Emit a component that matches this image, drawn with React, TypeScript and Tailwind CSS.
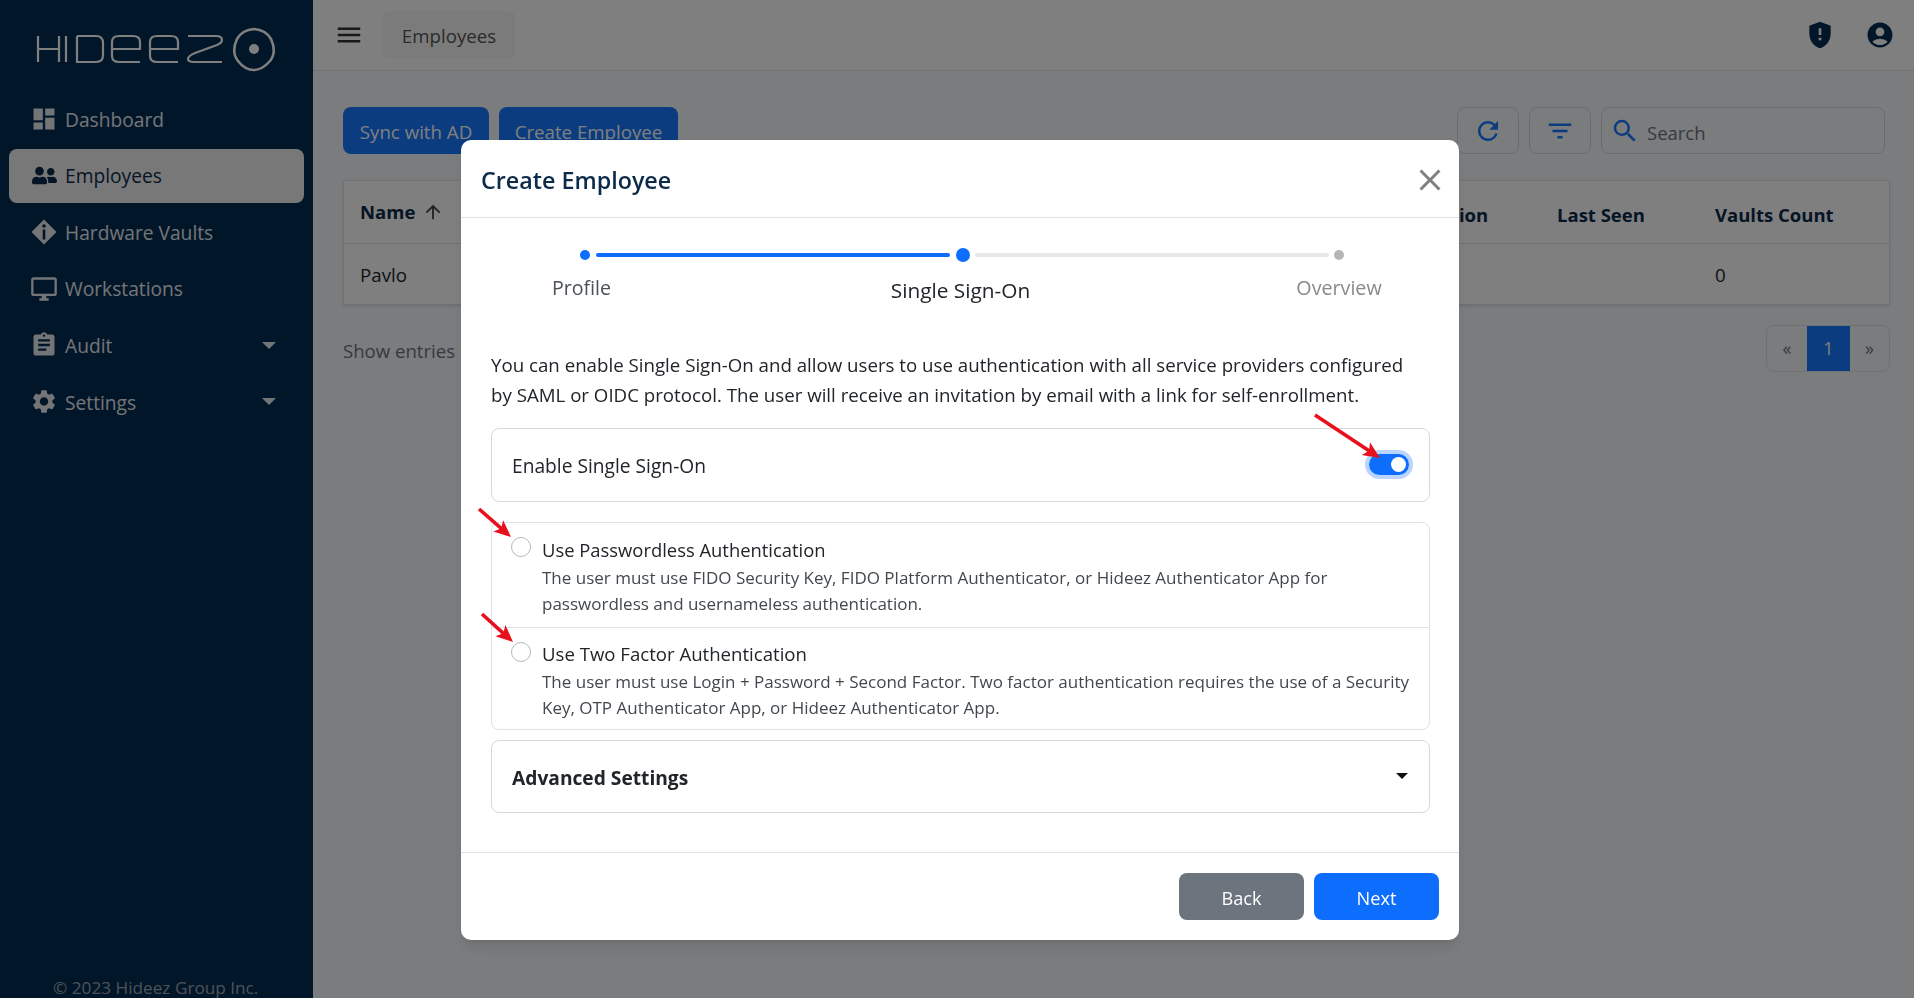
import type { ReactNode } from "react";
import { FaUserFriends } from "react-icons/fa";
import {
  MdAccountCircle,
  MdArrowUpward,
  MdAssignment,
  MdClose,
  MdDashboard,
  MdFilterList,
  MdGppMaybe,
  MdMenu,
  MdOutlineDesktopWindows,
  MdRefresh,
  MdSearch,
  MdSettings,
} from "react-icons/md";

const VaultIcon = () => (
  <svg width="26" height="26" viewBox="0 0 26 26" fill="currentColor">
    <path d="M13 0.5 25.5 13 13 25.5 0.5 13Z" />
    <rect x="11.7" y="10.5" width="2.6" height="10" fill="#042c52" />
    <circle cx="13" cy="7" r="1.8" fill="#042c52" />
  </svg>
);

const Logo = () => (
  <svg width="265" height="60" viewBox="0 0 265 60" fill="none" stroke="#ffffff" strokeWidth="2.2">
    <path d="M13 16V42M13 29H34M34 16V42" />
    <path d="M41 16V42" />
    <path d="M52 16V42H71Q78 42 78 35V23Q78 16 71 16H52" />
    <path d="M115 42H94Q87 42 87 36V22Q87 16 94 16H108Q115 16 115 22V29H87" />
    <path d="M153 42H132Q125 42 125 36V22Q125 16 132 16H146Q153 16 153 22V29H125" />
    <path d="M163 16H191Q197 16 197 20Q197 23 192 25L170 33Q163 36 163 39Q163 42 169 42H197" />
    <path d="M229 9Q241 10 246 19Q252 32 245 41Q237 50 229 50Q220 50 213 41Q206 32 212 19Q217 10 229 9Z" strokeWidth="2.6" />
    <circle cx="229" cy="29" r="5" fill="#ffffff" stroke="none" />
  </svg>
);

const NavItem = ({ icon, label, active, caret }: { icon: ReactNode; label: string; active?: boolean; caret?: boolean }) => (
  <div
    className={
      active
        ? "flex h-[54px] items-center rounded-lg bg-[#f0f1f3] pl-[21px] pr-[28px] text-[#0c2a4a]"
        : "flex h-[54px] items-center rounded-lg pl-[21px] pr-[28px] text-[#e6eaef]"
    }
  >
    <span className="flex w-[28px] shrink-0 items-center justify-center">{icon}</span>
    <span className="ml-[7px] pt-[2px] text-[19.2px]">{label}</span>
    {caret && <span className="ml-auto h-0 w-0 border-x-[7px] border-t-[7px] border-x-transparent border-t-[#e6eaef]" />}
  </div>
);

const ToolButton = ({ children }: { children: ReactNode }) => (
  <div className="flex h-[47px] w-[62px] items-center justify-center rounded-lg border border-[#d5d7da] text-[#1478ff]">
    {children}
  </div>
);

const Step = ({ label, dot, labelClass }: { label: string; dot: string; labelClass: string }) => (
  <div className="flex w-[240px] flex-col items-center">
    <span className={dot} />
    <span className={labelClass}>{label}</span>
  </div>
);

const AuthOption = ({ title, lines, first }: { title: string; lines: string[]; first?: boolean }) => (
  <div className={first ? "flex h-[105px] border-b border-[#dee2e6] pl-[19px] pr-2" : "flex h-[101px] pl-[19px] pr-2"}>
    <span className="mt-[14px] h-[20px] w-[20px] shrink-0 rounded-full border border-[#b4b8bd] bg-white" />
    <div className={first ? "ml-[11px] pt-[12px]" : "ml-[11px] pt-[11px]"}>
      <div className={first ? "text-[18.4px] leading-[30px] text-[#212529]" : "text-[18.6px] leading-[30px] text-[#212529]"}>{title}</div>
      <div className="text-[17px] leading-[26px] text-[#42484e]">
        {lines.map((l) => (
          <div key={l} className="whitespace-nowrap">
            {l}
          </div>
        ))}
      </div>
    </div>
  </div>
);

const RedArrow = ({ className, x1, y1, x2, y2 }: { className: string; x1: number; y1: number; x2: number; y2: number }) => {
  const a = Math.atan2(y2 - y1, x2 - x1);
  const p = (d: number, s: number) =>
    `${x2 - d * Math.cos(a) - s * Math.sin(a)},${y2 - d * Math.sin(a) + s * Math.cos(a)}`;
  return (
    <svg className={className} width="80" height="60" viewBox="0 0 80 60">
      <line x1={x1} y1={y1} x2={x2 - 10 * Math.cos(a)} y2={y2 - 10 * Math.sin(a)} stroke="#e8101c" strokeWidth="3.6" />
      <polygon points={`${x2},${y2} ${p(17, 7.5)} ${p(13, 0)} ${p(17, -7.5)}`} fill="#e8101c" />
    </svg>
  );
};

export default function App() {
  return (
    <div className="relative flex h-[998px] w-[1914px] overflow-hidden bg-[#f6f8fb] font-['Open_Sans','Noto_Sans',sans-serif] text-[#212529]">
      <aside className="flex w-[313px] shrink-0 flex-col bg-[#042c52] px-[9px]">
        <div className="ml-[16px] mt-[20px]">
          <Logo />
        </div>
        <nav className="mt-[12px] flex flex-col gap-[2.6px]">
          <NavItem icon={<MdDashboard className="text-[30px]" />} label="Dashboard" />
          <NavItem icon={<FaUserFriends className="text-[25px]" />} label="Employees" active />
          <NavItem icon={<VaultIcon />} label="Hardware Vaults" />
          <NavItem icon={<MdOutlineDesktopWindows className="text-[32px]" />} label="Workstations" />
          <NavItem icon={<MdAssignment className="text-[30px]" />} label="Audit" caret />
          <NavItem icon={<MdSettings className="text-[29px]" />} label="Settings" caret />
        </nav>
        <div className="mt-auto pl-[44px] text-[17.2px] leading-[20px] text-[#9aa4af]">© 2023 Hideez Group Inc.</div>
      </aside>

      <main className="flex min-w-0 flex-1 flex-col">
        <header className="flex h-[71px] shrink-0 items-center border-b border-[#e5e6e8] bg-white pl-[21px] pr-[19px]">
          <MdMenu className="text-[30px] text-[#333]" />
          <div className="ml-[19px] flex h-[48px] w-[132px] items-center justify-center rounded-md bg-[#f7f7f8] pt-[3px] text-[18.7px] text-[#555]">
            Employees
          </div>
          <MdGppMaybe className="ml-auto text-[32px] text-[#052c52]" />
          <MdAccountCircle className="ml-[29px] text-[30px] text-[#052c52]" />
        </header>

        <div className="flex flex-1 flex-col pl-[30px] pr-[24px] pt-[36px]">
          <div className="flex h-[47px] items-center gap-[10px]">
            <div className="flex h-[47px] w-[146px] items-center justify-center rounded-lg bg-[#1478ff] pt-[4px] text-[18.7px] text-white">
              Sync with AD
            </div>
            <div className="flex h-[47px] w-[179px] items-center justify-center rounded-lg bg-[#1478ff] pt-[4px] text-[18.7px] text-white">
              Create Employee
            </div>
            <div className="ml-auto flex items-center gap-[10px] pr-[5px]">
              <ToolButton>
                <MdRefresh className="text-[30px]" />
              </ToolButton>
              <ToolButton>
                <MdFilterList className="text-[30px]" />
              </ToolButton>
              <div className="flex h-[47px] w-[284px] items-center rounded-lg border border-[#d5d7da] pl-[8px]">
                <MdSearch className="text-[30px] text-[#1478ff]" />
                <span className="ml-[7px] pt-[4px] text-[18.5px] text-[#6c757d]">Search</span>
              </div>
            </div>
          </div>

          <div className="mt-[26px] border border-[#dee2e6] bg-white shadow-sm">
            <div className="flex h-[63px] items-center border-b border-[#dee2e6] pl-[16px] text-[18.5px] font-bold text-[#0c2a4a]">
              <span className="flex w-[1053px] items-center gap-1">
                Name <MdArrowUpward className="ml-[3px] text-[22px] text-[#444]" />
              </span>
              <span className="w-[144px] pt-[6px]">Position</span>
              <span className="w-[158px] pt-[6px]">Last Seen</span>
              <span className="pt-[6px]">Vaults Count</span>
            </div>
            <div className="flex h-[60px] items-center pl-[16px] pt-[3px] text-[18.7px]">
              <span className="w-[1355px]">Pavlo</span>
              <span>0</span>
            </div>
          </div>

          <div className="mt-[20px] flex items-center justify-between">
            <span className="pt-[4px] text-[18.6px] text-[#6c757d]">Show entries</span>
            <div className="flex h-[47px] w-[124px] overflow-hidden rounded-lg border border-[#dee2e6] text-[18px] text-[#6c757d]">
              <span className="flex w-[40px] items-center justify-center">«</span>
              <span className="flex w-[43px] items-center justify-center bg-[#1478ff] text-white">1</span>
              <span className="flex flex-1 items-center justify-center">»</span>
            </div>
          </div>
        </div>
      </main>

      <div className="fixed inset-0 bg-black/50 pl-[461px] pt-[140px]">
        <div className="relative h-[800px] w-[998px] rounded-[10px] bg-white shadow-lg">
          <div className="flex h-[78px] items-center justify-between border-b border-[#dee2e6] pl-[20px] pr-[11px]">
            <span className="pt-[4px] text-[23.3px] font-semibold text-[#0c2a4a]">Create Employee</span>
            <MdClose className="mt-[2px] text-[36px] text-[#808080]" />
          </div>

          <div className="relative mt-[27px] flex h-[98px] justify-between pl-[4px]">
            <Step
              label="Profile"
              dot="mt-[5px] h-[10px] w-[10px] rounded-full bg-[#0d6efd]"
              labelClass="mr-[7px] mt-[15px] text-[19.6px] leading-[26px] text-[#495057]"
            />
            <Step
              label="Single Sign-On"
              dot="ml-[1px] mt-[3px] h-[14px] w-[14px] rounded-full bg-[#0d6efd]"
              labelClass="mr-[3px] mt-[14px] text-[20.8px] leading-[28px] text-[#212529]"
            />
            <Step
              label="Overview"
              dot="mt-[5px] h-[10px] w-[10px] rounded-full bg-[#b5b5b5]"
              labelClass="mt-[15px] text-[19.7px] leading-[26px] text-[#8a8a8a]"
            />
            <span className="absolute left-[135px] top-[8px] h-[4px] w-[354px] rounded-full bg-[#0d6efd]" />
            <span className="absolute left-[514px] top-[8px] h-[4px] w-[354px] rounded-full bg-[#e7e7e7]" />
          </div>

          <div className="pl-[30px] pr-[29px]">
            <p className="mt-[7px] text-[18.7px] leading-[30px] text-[#212529]">
              You can enable Single Sign-On and allow users to use authentication with all service providers configured
              <br />
              by SAML or OIDC protocol. The user will receive an invitation by email with a link for self-enrollment.
            </p>
            <div className="mt-[18px] flex h-[74px] items-center justify-between rounded-lg border border-[#d6d9dc] pl-[20px] pr-[20px]">
              <span className="pt-[2px] text-[19.2px] text-[#212529]">Enable Single Sign-On</span>
              <span className="mb-[2px] flex h-[21px] w-[40px] items-center justify-end rounded-full bg-[#0d6efd] pr-[3px] ring-4 ring-[#b9d5fd]">
                <span className="h-[15px] w-[15px] rounded-full bg-white" />
              </span>
            </div>
            <div className="mt-[20px] rounded-lg border border-[#dee2e6]">
              <AuthOption
                first
                title="Use Passwordless Authentication"
                lines={[
                  "The user must use FIDO Security Key, FIDO Platform Authenticator, or Hideez Authenticator App for",
                  "passwordless and usernameless authentication.",
                ]}
              />
              <AuthOption
                title="Use Two Factor Authentication"
                lines={[
                  "The user must use Login + Password + Second Factor. Two factor authentication requires the use of a Security",
                  "Key, OTP Authenticator App, or Hideez Authenticator App.",
                ]}
              />
            </div>
            <div className="mt-[10px] flex h-[73px] items-center justify-between rounded-lg border border-[#d6d9dc] pl-[20px] pr-[20px]">
              <span className="pt-[4px] text-[19.2px] font-bold text-[#212529]">Advanced Settings</span>
              <span className="mb-[2px] mr-[1px] h-0 w-0 border-x-[6px] border-t-[6px] border-x-transparent border-t-[#111]" />
            </div>
          </div>

          <div className="mt-[39px] flex h-[88px] items-start justify-end gap-[10px] border-t border-[#dee2e6] pr-[20px] pt-[20px]">
            <div className="flex h-[47px] w-[125px] items-center justify-center rounded-lg bg-[#6c757d] pt-[5px] text-[18.2px] text-white">Back</div>
            <div className="flex h-[47px] w-[125px] items-center justify-center rounded-lg bg-[#0d6efd] pt-[5px] text-[18.2px] text-white">Next</div>
          </div>

          <RedArrow className="absolute left-[850px] top-[270px]" x1={4} y1={5} x2={69} y2={48} />
          <RedArrow className="absolute left-[10px] top-[365px]" x1={8} y1={4} x2={40} y2={32} />
          <RedArrow className="absolute left-[12px] top-[470px]" x1={9} y1={4} x2={40} y2={32} />
        </div>
      </div>
    </div>
  );
}
